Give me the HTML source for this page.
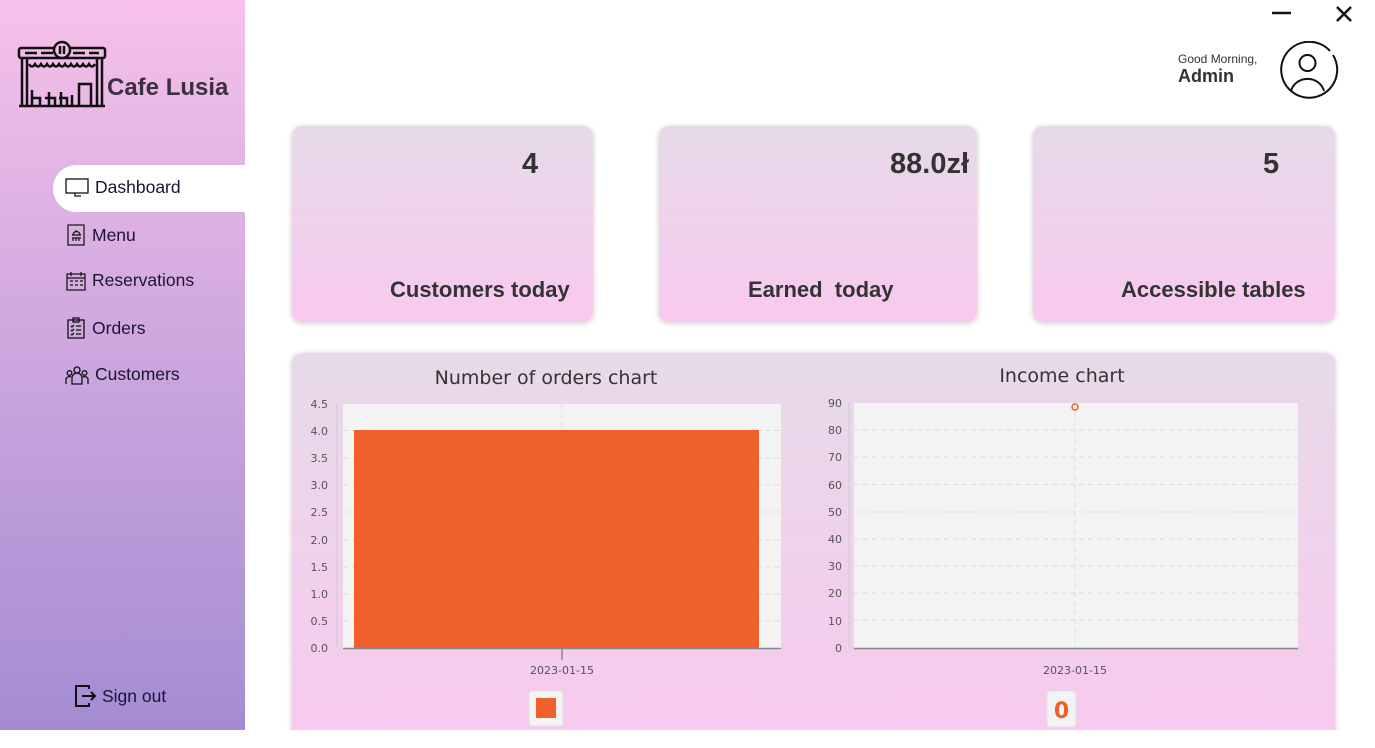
<!DOCTYPE html>
<html><head><meta charset="utf-8"><style>
*{margin:0;padding:0;box-sizing:border-box}
body{width:1375px;height:748px;background:#fff;position:relative;overflow:hidden;font-family:"Liberation Sans",sans-serif;color:#222}
.abs{position:absolute}
#side{left:0;top:0;width:245px;height:730px;background:linear-gradient(#f7c1ea,#c7a3dd 55%,#a48cd2)}
.nav{position:absolute;left:65px;font-family:"Liberation Sans",sans-serif;font-size:17.5px;color:#1a1530;display:flex;align-items:center;gap:6px}
.card{position:absolute;border-radius:10px;background:linear-gradient(#e6dae8,#f9c9ef);box-shadow:0 1px 6px rgba(0,0,0,.22)}
.num{position:absolute;font-weight:bold;font-size:29px;color:#333}
.lbl{position:absolute;font-weight:bold;font-size:22px;color:#333}
svg text{font-family:"DejaVu Sans",sans-serif}
</style></head><body>
<div id="side" class="abs">
<svg class="abs" style="left:17px;top:40px" width="90" height="70" viewBox="0 0 90 70" fill="none" stroke="#111" stroke-width="2.5">
<rect x="2" y="8" width="86" height="10" rx="2"/><circle cx="45" cy="10" r="8" fill="#f4bde8"/>
<path d="M43 6v8M47 6v8M8 13h12M24 13h12M56 13h12M72 13h10"/>
<path d="M5 18v48M85 18v48M2 66h86M10 18v48M80 18v48"/>
<path d="M12 24q3 5 6 0q3 5 6 0q3 5 6 0q3 5 6 0q3 5 6 0q3 5 6 0q3 5 6 0q3 5 6 0q3 5 6 0q3 5 6 0q3 5 6 0"/>
<path d="M62 66V44h12v22M15 50v16M15 58h8v8M32 52v14M28 58h10v8M44 52v14M42 58h8v8M55 55v11"/>
</svg>
<div class="abs" style="left:107px;top:74px;font-size:24px;font-weight:bold;color:#3a3040">Cafe Lusia</div>
<div class="abs" style="left:53px;top:165px;width:192px;height:47px;background:#fff;border-radius:24px 0 0 24px"></div>
<div class="nav" style="top:177px"><svg width="24" height="20" viewBox="0 0 24 20" fill="none" stroke="#111" stroke-width="1.3"><rect x="1" y="1" width="22" height="14"/><path d="M10 15v3h5M12 18h4"/></svg>Dashboard</div>
<div class="nav" style="top:224px;left:66px"><svg width="20" height="22" viewBox="0 0 20 22" fill="none" stroke="#111" stroke-width="1.2"><rect x="2" y="1" width="16" height="20"/><path d="M6 11h9M7 11a3.5 3.5 0 0 1 7 0M10 6v1M6 14h9M7 14v3M10 14v3M13 14v3"/></svg>Menu</div>
<div class="nav" style="top:270px;left:66px"><svg width="20" height="20" viewBox="0 0 20 20" fill="none" stroke="#111" stroke-width="1.2"><rect x="1" y="3" width="18" height="16"/><path d="M1 7h18M5 1v4M15 1v4M4 10h3M9 10h3M14 10h3M4 14h3M9 14h3M14 14h3"/></svg>Reservations</div>
<div class="nav" style="top:317px;left:66px"><svg width="20" height="22" viewBox="0 0 20 22" fill="none" stroke="#111" stroke-width="1.3"><rect x="2" y="3" width="16" height="18"/><rect x="7" y="1" width="6" height="4"/><path d="M5 9l1 1 2-2M10 9h5M5 13l1 1 2-2M10 13h5M5 17l1 1 2-2M10 17h5"/></svg>Orders</div>
<div class="nav" style="top:364px;left:65px"><svg width="24" height="20" viewBox="0 0 24 20" fill="none" stroke="#111" stroke-width="1.3"><circle cx="12" cy="5" r="3"/><circle cx="4.5" cy="8" r="2.3"/><circle cx="19.5" cy="8" r="2.3"/><path d="M7 19v-6a5 5 0 0 1 10 0v6zM1 19v-5a3.5 3.5 0 0 1 5-2M23 19v-5a3.5 3.5 0 0 0-5-2"/></svg>Customers</div>
<div class="nav" style="top:683px;left:74px;gap:4px"><svg width="24" height="26" viewBox="0 0 24 26" fill="none" stroke="#111" stroke-width="2"><path d="M15 6V3H2v20h13v-3M8 13h13M17 9l4 4-4 4"/></svg>Sign out</div>
</div>

<svg class="abs" style="left:1270px;top:5px" width="90" height="20" fill="none" stroke="#111" stroke-width="2.6"><path d="M2 8h19M67 2l14 14M81 2l-14 14"/></svg>
<div class="abs" style="left:1178px;top:52px;font-size:12px;font-family:'Liberation Sans',sans-serif;color:#333">Good Morning,</div>
<div class="abs" style="left:1178px;top:66px;font-size:18px;font-weight:bold;color:#333">Admin</div>
<svg class="abs" style="left:1279px;top:41px" width="60" height="60" fill="none" stroke="#111" stroke-width="2"><path d="M51 10A28 28 0 1 0 54 14"/><circle cx="28.5" cy="22" r="8"/><path d="M12 50a17 16 0 0 1 33 0"/></svg>

<div class="card" style="left:292px;top:126px;width:301px;height:196px"></div>
<div class="num" style="left:522px;top:148px">4</div>
<div class="lbl" style="left:390px;top:277px">Customers today</div>
<div class="card" style="left:659px;top:126px;width:318px;height:196px"></div>
<div class="num" style="left:890px;top:148px">88.0zł</div>
<div class="lbl" style="left:748px;top:277px">Earned&nbsp; today</div>
<div class="card" style="left:1033px;top:126px;width:302px;height:196px"></div>
<div class="num" style="left:1263px;top:148px">5</div>
<div class="lbl" style="left:1121px;top:277px">Accessible tables</div>

<div class="card" style="left:292px;top:353px;width:1043px;height:395px;border-radius:10px 10px 0 0"></div>
<div class="abs" style="left:0;top:730px;width:1375px;height:18px;background:#fff"></div>

<svg class="abs" style="left:0;top:0" width="1375" height="748">
<text x="546" y="384" text-anchor="middle" font-size="19" fill="#333">Number of orders chart</text>
<rect x="343" y="404" width="438" height="244" fill="#f4f3f4"/>
<g stroke="#ddd" stroke-dasharray="5,4">
<path d="M343 430.5H781M343 458H781M343 485H781M343 512H781M343 540H781M343 567H781M343 594H781M343 621H781M562 404V648"/></g>
<rect x="354" y="430" width="405" height="218" fill="#f0602d"/>
<path d="M343 648.5H781M562 648v12" stroke="#888" stroke-width="1.5"/>
<path d="M337 404V648" stroke="#ccc" stroke-width="1"/>
<g font-size="11" fill="#555" text-anchor="end">
<text x="328" y="408">4.5</text><text x="328" y="435">4.0</text><text x="328" y="462">3.5</text><text x="328" y="489">3.0</text><text x="328" y="516">2.5</text><text x="328" y="544">2.0</text><text x="328" y="571">1.5</text><text x="328" y="598">1.0</text><text x="328" y="625">0.5</text><text x="328" y="652">0.0</text></g>
<text x="562" y="674" text-anchor="middle" font-size="11" fill="#555">2023-01-15</text>
<rect x="529" y="691" width="34" height="35" rx="3" fill="#f4f3f4" stroke="#e0e0e0"/>
<rect x="536" y="698" width="20" height="20" fill="#f0602d"/>

<text x="1062" y="382" text-anchor="middle" font-size="19" fill="#333">Income chart</text>
<rect x="854" y="403" width="444" height="245" fill="#f4f3f4"/>
<g stroke="#ddd" stroke-dasharray="5,4">
<path d="M854 430H1298M854 457H1298M854 484.5H1298M854 512H1298M854 539H1298M854 566H1298M854 593H1298M854 620H1298M1075 403V660"/></g>
<path d="M854 648.5H1298" stroke="#888" stroke-width="1.5"/>
<path d="M849 403V648" stroke="#ccc"/>
<g font-size="11" fill="#555" text-anchor="end">
<text x="842" y="407">90</text><text x="842" y="434">80</text><text x="842" y="461">70</text><text x="842" y="489">60</text><text x="842" y="516">50</text><text x="842" y="543">40</text><text x="842" y="570">30</text><text x="842" y="597">20</text><text x="842" y="625">10</text><text x="842" y="652">0</text></g>
<circle cx="1075" cy="407" r="3" fill="#fff" stroke="#f0602d" stroke-width="1.5"/>
<text x="1075" y="674" text-anchor="middle" font-size="11" fill="#555">2023-01-15</text>
<rect x="1047" y="691" width="29" height="36" rx="3" fill="#f4f3f4" stroke="#e0e0e0"/>
<text x="1061.5" y="718" text-anchor="middle" font-size="22" font-weight="bold" fill="#f0602d">0</text>
</svg>
</body></html>
